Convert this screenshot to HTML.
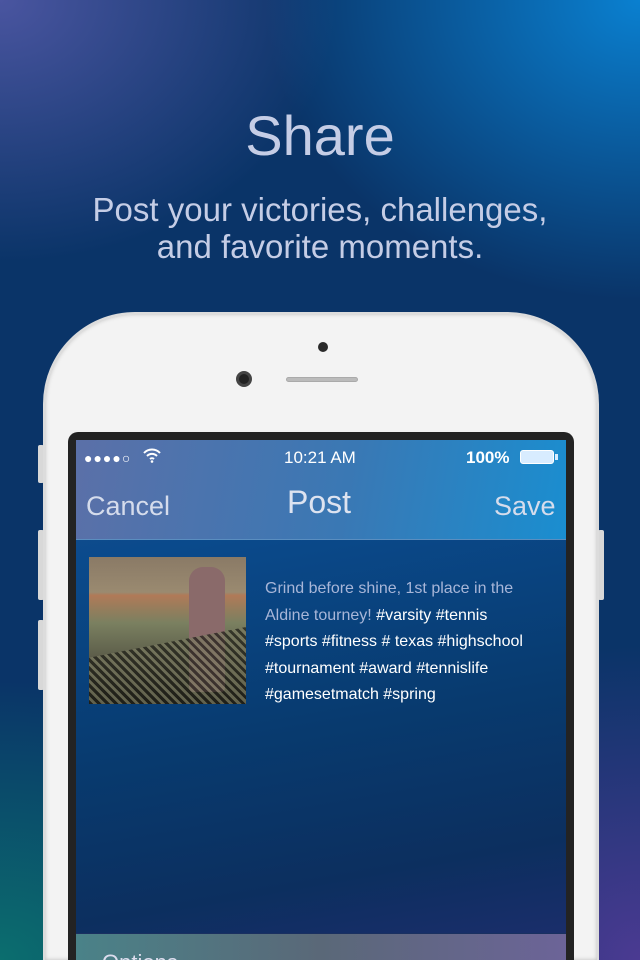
<!DOCTYPE html>
<html style="width:640px;height:960px;overflow:hidden"><head><style>
*{margin:0;padding:0;box-sizing:border-box}
body{width:640px;height:960px;overflow:hidden;position:relative;font-family:"Liberation Sans",sans-serif;
background:
radial-gradient(ellipse 500px 400px at 0% 100%,#0b6e6e 0%,rgba(11,110,110,0) 70%),
radial-gradient(ellipse 450px 450px at 100% 100%,#4b3a92 0%,rgba(75,58,146,0) 70%),
radial-gradient(ellipse 500px 400px at 100% 0%,#0a80d0 0%,rgba(10,128,208,0) 75%),
radial-gradient(ellipse 450px 350px at 0% 0%,#4a55a0 0%,rgba(74,85,160,0) 75%),
#0a3468;}
.h1{position:absolute;top:103px;width:640px;text-align:center;color:#c5cde6;font-size:56px;font-weight:300}
.sub{position:absolute;top:191px;width:640px;text-align:center;color:#c5cde6;font-size:33px;line-height:37px}
.phone{position:absolute;left:43px;top:312px;width:556px;background:#f3f3f3;border-radius:92px 92px 0 0;border:2px solid #dcdcdc;border-bottom:none;box-shadow:inset 0 0 4px #bbb}
.btn{position:absolute;background:#d8d8d8;width:6px;border-radius:2px}
.bezel{position:absolute;left:68px;top:432px;width:506px;height:528px;background:#232323;border-radius:10px 10px 0 0}
.screen{position:absolute;left:76px;top:440px;width:490px;height:520px;overflow:hidden;
background:linear-gradient(170deg,#21508f 0%,#0a4a8c 20%,#083a6e 55%,#0c2f5f 80%,#1e2d6e 100%)}
.nav{position:absolute;left:0;top:0;width:490px;height:100px;background:linear-gradient(100deg,#5b70a8 0%,#3a78b4 55%,#1a8ed0 100%);border-bottom:1px solid #5a8ec0}
.t{position:absolute;color:#fff}
.opts{position:absolute;left:0;top:493px;width:490px;height:60px;background:linear-gradient(90deg,#4a8288,#5a6878 50%,#6c6498);border-top:1px solid #1a3060}
</style></head><body>
<div class="h1">Share</div>
<div class="sub">Post your victories, challenges,<br>and favorite moments.</div>
<div class="btn" style="left:38px;top:445px;height:38px"></div>
<div class="btn" style="left:38px;top:530px;height:70px"></div>
<div class="btn" style="left:38px;top:620px;height:70px"></div>
<div class="btn" style="left:598px;top:530px;height:70px"></div>
<div class="phone" style="height:648px"></div>
<div style="position:absolute;left:318px;top:342px;width:10px;height:10px;border-radius:50%;background:#2a2a2a"></div>
<div style="position:absolute;left:236px;top:371px;width:16px;height:16px;border-radius:50%;background:#222;border:3px solid #444"></div>
<div style="position:absolute;left:286px;top:377px;width:72px;height:5px;border-radius:3px;background:#bbb;border:1px solid #aaa"></div>
<div class="bezel"></div>
<div class="screen">
 <div class="nav">
  <div class="t" style="left:8px;top:10px;font-size:14px;letter-spacing:1px">●●●●○</div>
  <svg style="position:absolute;left:66px;top:7px" width="20" height="16" viewBox="0 0 20 16"><path d="M2 6a11 11 0 0 1 16 0M5 9a7 7 0 0 1 10 0M8 12a3 3 0 0 1 4 0" stroke="#fff" stroke-width="2" fill="none"/><circle cx="10" cy="14.5" r="1.3" fill="#fff"/></svg>
  <div class="t" style="left:208px;top:8px;font-size:17px">10:21 AM</div>
  <div class="t" style="left:390px;top:8px;font-size:17px;font-weight:bold">100%</div>
  <div style="position:absolute;left:444px;top:10px;width:34px;height:14px;background:#d8ecff;border-radius:3px;border:1px solid #fff"></div>
  <div style="position:absolute;left:479px;top:14px;width:3px;height:6px;background:#d8ecff"></div>
  <div class="t" style="left:10px;top:51px;font-size:27px;color:#d5dcec">Cancel</div>
  <div class="t" style="left:211px;top:44px;font-size:32px;color:#dde3f0">Post</div>
  <div class="t" style="left:418px;top:51px;font-size:27px;color:#d5dcec">Save</div>
 </div>
 <div style="position:absolute;left:13px;top:117px;width:157px;height:147px;background:linear-gradient(180deg,#8a7a66 0%,#9a8a70 24%,#b07a58 26%,#7a8060 45%,#5a5a48 70%,#2a2a20 100%)">
  <div style="position:absolute;left:100px;top:10px;width:36px;height:125px;background:#8a6a6a;border-radius:14px 14px 4px 4px"></div>
  <div style="position:absolute;left:0;top:70px;width:157px;height:77px;background:repeating-linear-gradient(45deg,#1a1a14 0 3px,#7a7a60 3px 6px);opacity:.7;clip-path:polygon(0 40%,100% 0,100% 100%,0 100%)"></div>
 </div>
 <div style="position:absolute;left:189px;top:136px;font-size:16px;line-height:26.5px;color:#fff;white-space:nowrap">
  <span style="color:#a8b6d8">Grind before shine, 1st place in the<br>Aldine tourney!</span> #varsity #tennis<br>#sports #fitness # texas #highschool<br>#tournament #award #tennislife<br>#gamesetmatch #spring
 </div>
 <div class="opts"><div class="t" style="left:26px;top:16px;font-size:22px;color:#dde">Options</div></div>
</div>
</body></html>
